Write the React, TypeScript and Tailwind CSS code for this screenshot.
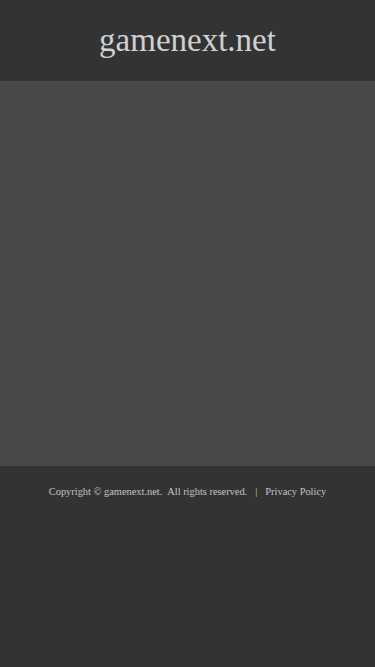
export default function App() {
  return (
    <div className="min-h-[667px] bg-[#333333] flex flex-col" style={{ fontFamily: '"Liberation Serif", serif' }}>
      <header className="h-[81px] bg-[#333333] flex items-center justify-center">
        <h1 className="text-[33px] text-[#d0d0d0] leading-none">gamenext.net</h1>
      </header>
      <main className="h-[385px] bg-[#484848]"></main>
      <footer className="bg-[#333333] flex justify-center pt-[18px]">
        <p className="text-[10.4px] text-[#c4c4c4] flex items-center whitespace-nowrap">
          <span>Copyright © gamenext.net.</span>
          <span className="ml-[5px]">All rights reserved.</span>
          <span className="ml-[8px]">|</span>
          <span className="ml-[8px]">Privacy Policy</span>
        </p>
      </footer>
    </div>
  );
}
